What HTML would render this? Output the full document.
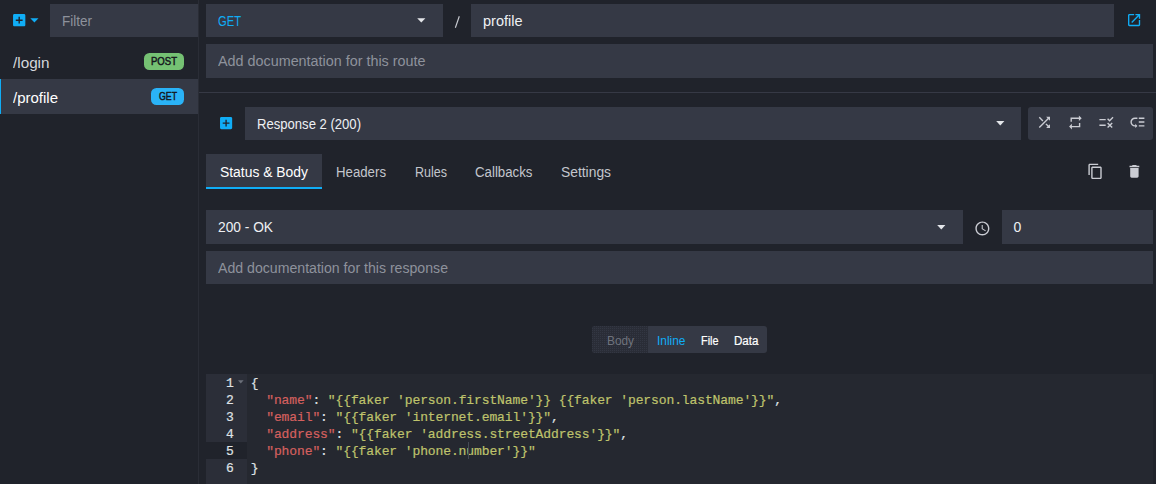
<!DOCTYPE html>
<html>
<head>
<meta charset="utf-8">
<title>Mockoon</title>
<style>
*{box-sizing:border-box;margin:0;padding:0}
html,body{width:1156px;height:484px;overflow:hidden;background:#20232b;font-family:"Liberation Sans",sans-serif;font-size:14px;color:#e4e6ea}
.a{position:absolute}
.in{position:absolute;background:#353945}
.t{position:absolute;white-space:pre;line-height:16px;height:16px;transform-origin:0 50%}
.ph{color:#8e929c}
.blue{color:#10adf6}
svg{position:absolute;display:block}
.badge{position:absolute;height:17px;border-radius:5.5px}
.bt{font-size:11px;color:#15181e;-webkit-text-stroke:0.5px #15181e}
.ed{-webkit-text-stroke:0.2px;font-family:"Liberation Mono",monospace;font-size:13px;letter-spacing:-0.105px;white-space:pre;line-height:17px;height:17px;position:absolute;left:250.8px;color:#dfe1e4}
.k{color:#d5605f}.s{color:#bfc36c}
.ln{-webkit-text-stroke:0.2px;position:absolute;left:206px;width:27.8px;text-align:right;font-family:"Liberation Mono",monospace;font-size:13px;letter-spacing:-0.105px;line-height:17px;height:17px;color:#dfe1e4}
</style>
</head>
<body>
<!-- sidebar -->
<div class="a" style="left:198px;top:0;width:1px;height:484px;background:#2a2d36"></div>
<svg style="left:10.8px;top:11.7px" width="16.4" height="16.4" viewBox="0 0 24 24" fill="#10adf6"><path d="M19 3H5c-1.11 0-2 .9-2 2v14c0 1.1.89 2 2 2h14c1.1 0 2-.9 2-2V5c0-1.1-.9-2-2-2zm-2 10h-4v4h-2v-4H7v-2h4V7h2v4h4v2z"/></svg>
<svg style="left:29.7px;top:18px" width="9" height="5" viewBox="0 0 9 5"><path d="M0.3 0.2h8.2L4.4 4.6z" fill="#10adf6"/></svg>
<div class="in" style="left:50px;top:4px;width:148px;height:33px"></div>
<div class="t ph" id="tFilter" style="transform:scaleX(0.9639);left:61.5px;top:13px">Filter</div>

<div class="t" id="tLogin" style="transform:scaleX(1.0906);left:13px;top:54.5px;color:#d4d7dc">/login</div>
<div class="badge" style="left:144px;top:53px;width:40px;background:#75c173"></div>
<div class="t bt" id="tPost" style="transform:scaleX(0.8680);left:151px;top:53.4px">POST</div>

<div class="a" style="left:0;top:79px;width:198px;height:35px;background:#353945"></div>
<div class="a" style="left:0;top:79px;width:1px;height:35px;background:#10adf6"></div>
<div class="t" id="tProfile" style="transform:scaleX(1.0706);left:13px;top:89.5px;color:#fff">/profile</div>
<div class="badge" style="left:151px;top:88px;width:33px;background:#2ab3f7"></div>
<div class="t bt" id="tGetB" style="transform:scaleX(0.7956);left:158.5px;top:88.4px">GET</div>

<!-- route header -->
<div class="in" style="left:206px;top:4px;width:237px;height:33px"></div>
<div class="t blue" id="tGet" style="transform:scaleX(0.7991);left:217.5px;top:13px">GET</div>
<svg style="left:417px;top:18px" width="9" height="5" viewBox="0 0 9 5"><path d="M0.2 0.2h8.2L4.3 4.6z" fill="#e4e6ea"/></svg>
<svg style="left:452px;top:14px" width="10" height="17" viewBox="0 0 10 17"><path d="M7.3 2.3L3.35 13.7" stroke="#c9ccd2" stroke-width="1.15" fill="none"/></svg>
<div class="in" style="left:471px;top:4px;width:643px;height:33px"></div>
<div class="t" id="tPath" style="transform:scaleX(1.0356);left:483px;top:13px;color:#eef0f3">profile</div>
<svg style="left:1125.9px;top:11.85px" width="16.2" height="16.2" viewBox="0 0 24 24" fill="#10adf6"><path d="M19 19H5V5h7V3H5c-1.11 0-2 .9-2 2v14c0 1.1.89 2 2 2h14c1.1 0 2-.9 2-2v-7h-2v7zM14 3v2h3.59l-9.83 9.83 1.41 1.41L19 6.41V10h2V3h-7z"/></svg>

<div class="in" style="left:206px;top:44px;width:947px;height:34px"></div>
<div class="t ph" id="tDocR" style="transform:scaleX(1.0255);left:217.5px;top:53px">Add documentation for this route</div>

<div class="a" style="left:199px;top:92px;width:957px;height:1px;background:#363945"></div>

<!-- response row -->
<svg style="left:217.8px;top:114.75px" width="16.2" height="16.2" viewBox="0 0 24 24" fill="#10adf6"><path d="M19 3H5c-1.11 0-2 .9-2 2v14c0 1.1.89 2 2 2h14c1.1 0 2-.9 2-2V5c0-1.1-.9-2-2-2zm-2 10h-4v4h-2v-4H7v-2h4V7h2v4h4v2z"/></svg>
<div class="in" style="left:245px;top:107px;width:776px;height:33px"></div>
<div class="t" id="tResp" style="transform:scaleX(0.9344);left:257px;top:116px;color:#eef0f3">Response 2 (200)</div>
<svg style="left:996px;top:121px" width="9" height="5" viewBox="0 0 9 5"><path d="M0.2 0h8.2L4.3 4.4z" fill="#e4e6ea"/></svg>
<div class="in" style="left:1028px;top:107px;width:125px;height:33px;border-radius:3px"></div>
<!-- shuffle -->
<svg style="left:1035.60px;top:114.20px" width="16.8" height="16.8" viewBox="0 0 24 24" fill="#caccd3"><path d="M10.59 9.17L5.41 4 4 5.41l5.17 5.17 1.42-1.41zM14.5 4l2.04 2.04L4 18.59 5.41 20 17.96 7.46 20 9.5V4h-5.5zm.33 9.41l-1.41 1.41 3.13 3.13L14.5 20H20v-5.5l-2.04 2.04-3.13-3.13z"/></svg>
<!-- repeat -->
<svg style="left:1066.50px;top:114.20px" width="16.8" height="16.8" viewBox="0 0 24 24" fill="#caccd3"><path d="M7 7h10v3l4-4-4-4v3H5v6h2V7zm10 10H7v-3l-4 4 4 4v-3h12v-6h-2v4z"/></svg>
<!-- rule-check -->
<svg style="left:1097.60px;top:114.20px" width="16.8" height="16.8" viewBox="0 0 24 24" fill="#caccd3"><path d="M16.54 11L13 7.46l1.41-1.41 2.12 2.12 4.24-4.24 1.41 1.41L16.54 11zM11 7H2v2h9V7zm10 6.41L19.59 12 17 14.59 14.41 12 13 13.41 15.59 16 13 18.59 14.41 20 17 17.41 19.59 20 21 18.59 18.41 16 21 13.41zM11 15H2v2h9v-2z"/></svg>
<!-- low priority -->
<svg style="left:1128.80px;top:114.20px" width="16.8" height="16.8" viewBox="0 0 24 24" fill="#caccd3"><path d="M14 5h8v2h-8zm0 5.5h8v2h-8zm0 5.5h8v2h-8zM2 11.5C2 15.08 4.92 18 8.5 18H9v2l3-3-3-3v2h-.5C6.02 16 4 13.98 4 11.5S6.02 7 8.5 7H12V5H8.5C4.92 5 2 7.92 2 11.5z"/></svg>

<!-- tabs -->
<div class="a" style="left:206px;top:154px;width:116px;height:35px;background:#353945"></div>
<div class="a" style="left:206px;top:187px;width:116px;height:2px;background:#10adf6"></div>
<div class="t" id="tTab1" style="transform:scaleX(0.9919);left:220px;top:164px;color:#fff">Status &amp; Body</div>
<div class="t" id="tTab2" style="transform:scaleX(0.9448);left:336px;top:164px;color:#c3c6cd">Headers</div>
<div class="t" id="tTab3" style="transform:scaleX(0.8939);left:415px;top:164px;color:#c3c6cd">Rules</div>
<div class="t" id="tTab4" style="transform:scaleX(0.9472);left:475px;top:164px;color:#c3c6cd">Callbacks</div>
<div class="t" id="tTab5" style="transform:scaleX(0.9883);left:560.5px;top:164px;color:#c3c6cd">Settings</div>
<!-- copy -->
<svg style="left:1086.50px;top:162.60px" width="16.8" height="16.8" viewBox="0 0 24 24" fill="#caccd3"><path d="M16 1H4c-1.1 0-2 .9-2 2v14h2V3h12V1zm3 4H8c-1.1 0-2 .9-2 2v14c0 1.1.9 2 2 2h11c1.1 0 2-.9 2-2V7c0-1.1-.9-2-2-2zm0 16H8V7h11v14z"/></svg>
<!-- trash -->
<svg style="left:1125.85px;top:162.50px" width="16.8" height="16.8" viewBox="0 0 24 24" fill="#caccd3"><path d="M6 19c0 1.1.9 2 2 2h8c1.1 0 2-.9 2-2V7H6v12zM19 4h-3.5l-1-1h-5l-1 1H5v2h14V4z"/></svg>

<!-- status row -->
<div class="in" style="left:206px;top:210px;width:757px;height:34px"></div>
<div class="t" id="tStatus" style="transform:scaleX(0.9816);left:217.5px;top:218.5px;color:#eef0f3">200 - OK</div>
<svg style="left:937px;top:225px" width="9" height="5" viewBox="0 0 9 5"><path d="M0.2 0h8.2L4.3 4.4z" fill="#e4e6ea"/></svg>
<svg style="left:973.60px;top:219.60px" width="16.8" height="16.8" viewBox="0 0 24 24" fill="#caccd3"><path d="M11.99 2C6.47 2 2 6.48 2 12s4.47 10 9.99 10C17.52 22 22 17.52 22 12S17.52 2 11.99 2zM12 20c-4.42 0-8-3.58-8-8s3.58-8 8-8 8 3.58 8 8-3.58 8-8 8zm.5-13H11v6l5.25 3.15.75-1.23-4.5-2.67z"/></svg>
<div class="in" style="left:1002px;top:210px;width:151px;height:34px"></div>
<div class="t" style="left:1013.5px;top:218.5px;color:#eef0f3">0</div>

<div class="in" style="left:206px;top:251px;width:947px;height:33px"></div>
<div class="t ph" id="tDocResp" style="transform:scaleX(1.0086);left:217.5px;top:260px">Add documentation for this response</div>

<!-- body toggle -->
<div class="a" style="left:592px;top:326px;width:175px;height:27px;border-radius:3px;background:#353945;overflow:hidden"><div class="a" style="left:0;top:0;width:56px;height:27px;background-color:#2a2d37;background-image:radial-gradient(circle at 0.5px 0.5px,#333743 0.5px,transparent 0.7px);background-size:2px 2px"></div></div>
<div class="t" id="tBody" style="transform:scaleX(0.9869);left:607px;top:332.5px;font-size:12px;color:#6f737d">Body</div>
<div class="t blue" id="tInline" style="transform:scaleX(0.9935);left:656.5px;top:332.5px;font-size:12px">Inline</div>
<div class="t" id="tFile" style="transform:scaleX(0.9047);left:701px;top:332.5px;font-size:12px;color:#fff;-webkit-text-stroke:0.2px">File</div>
<div class="t" id="tData" style="transform:scaleX(0.9661);left:734.2px;top:332.5px;font-size:12px;color:#fff;-webkit-text-stroke:0.2px">Data</div>

<!-- editor -->
<div class="a" style="left:206px;top:374px;width:947px;height:110px;background:#252830"></div>
<div class="a" style="left:206px;top:374px;width:41px;height:110px;background:#2b2e38"></div>
<div class="a" style="left:206px;top:442px;width:41px;height:17px;background:#20232b"></div>
<div class="ln" style="top:375px">1</div>
<div class="ln" style="top:392px">2</div>
<div class="ln" style="top:409px">3</div>
<div class="ln" style="top:426px">4</div>
<div class="ln" style="top:443px">5</div>
<div class="ln" style="top:460px">6</div>
<svg style="left:238px;top:380px" width="6" height="4" viewBox="0 0 6 4"><path d="M0 0.3h5.6L2.8 3.6z" fill="#6c707a"/></svg>
<div class="ed" style="top:375px">{</div>
<div class="ed" style="top:392px">  <span class="k">"name"</span>: <span class="s">"{{faker 'person.firstName'}} {{faker 'person.lastName'}}"</span>,</div>
<div class="ed" style="top:409px">  <span class="k">"email"</span>: <span class="s">"{{faker 'internet.email'}}"</span>,</div>
<div class="ed" style="top:426px">  <span class="k">"address"</span>: <span class="s">"{{faker 'address.streetAddress'}}"</span>,</div>
<div class="ed" style="top:443px">  <span class="k">"phone"</span>: <span class="s">"{{faker 'phone.number'}}"</span></div>
<div class="ed" style="top:460px">}</div>
<div class="a" style="left:468px;top:442px;width:1px;height:17px;background:#464a55"></div>
</body>
</html>
